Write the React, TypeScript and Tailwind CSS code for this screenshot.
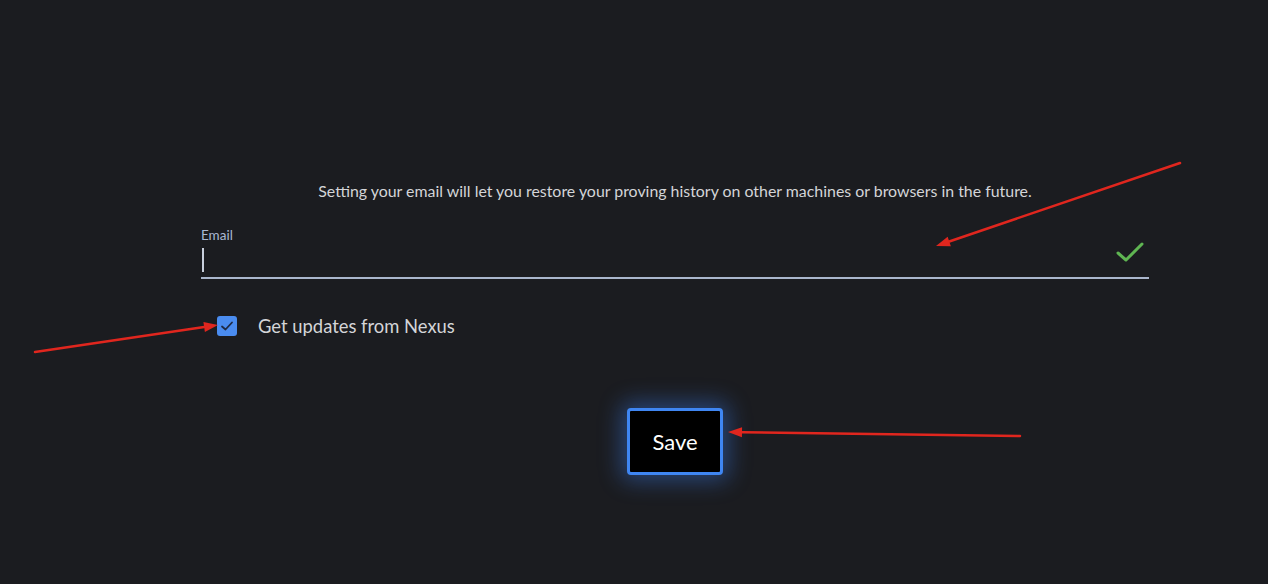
import React from 'react';

function Arrow({ x1, y1, x2, y2 }: { x1: number; y1: number; x2: number; y2: number }) {
  const ang = Math.atan2(y2 - y1, x2 - x1);
  const len = 14;
  const w = 5;
  const bx = x2 - Math.cos(ang) * len;
  const by = y2 - Math.sin(ang) * len;
  const px = -Math.sin(ang) * w;
  const py = Math.cos(ang) * w;
  return (
    <g>
      <line x1={x1} y1={y1} x2={bx} y2={by} stroke="#e0261e" strokeWidth={2.5} strokeLinecap="round" />
      <polygon points={`${x2},${y2} ${bx + px},${by + py} ${bx - px},${by - py}`} fill="#e0261e" />
    </g>
  );
}

export default function App() {
  const [checked, setChecked] = React.useState(true);
  return (
    <div
      className="relative w-[1268px] h-[584px] bg-[#1b1c20] overflow-hidden"
      style={{ fontFamily: 'Lato, "Noto Sans", sans-serif' }}
    >
      <div className="ml-[201px] w-[948px] pt-[181px] flex flex-col">
        <p className="text-center text-[15.9px] leading-[20px] text-[#d4d5d8] whitespace-nowrap">
          Setting your email will let you restore your proving history on other machines or browsers in the future.
        </p>

        <div className="mt-[26px] flex flex-col">
          <label className="text-[13.5px] leading-[16px] text-[#a9b8d2]">Email</label>
          <div className="relative h-[36px] border-b-2 border-[#aab6cc] flex items-center">
            <span className="ml-[1px] w-[2px] h-[24px] bg-[#c8cfdc]" />
            <svg
              className="absolute right-[5px] top-[-2px]"
              width="28"
              height="22"
              viewBox="0 0 28 22"
              fill="none"
            >
              <path d="M2 12 L10 19 L26 3" stroke="#5fb552" strokeWidth="3" strokeLinecap="round" strokeLinejoin="round" />
            </svg>
          </div>
        </div>

        <div className="mt-[33px] ml-[16px] flex items-center gap-[21px] h-[28px]">
          <button
            onClick={() => setChecked(!checked)}
            className="w-[20px] h-[20px] rounded-[3px] bg-[#4a8cf0] flex items-center justify-center"
          >
            {checked && (
              <svg width="14" height="12" viewBox="0 0 14 12" fill="none">
                <path d="M2 6.5 L5.5 9.5 L12 2.5" stroke="#1e2a44" strokeWidth="1.8" strokeLinecap="round" strokeLinejoin="round" />
              </svg>
            )}
          </button>
          <span className="text-[18.4px] leading-[28px] text-[#d4d5d8]">Get updates from Nexus</span>
        </div>

        <div className="mt-[68px] flex justify-center">
          <button className="w-[96px] h-[67px] rounded-[4px] border-[3px] border-[#3f86f2] bg-black text-white text-[22px] shadow-[0_0_22px_6px_rgba(59,130,246,0.4)]">
            Save
          </button>
        </div>
      </div>

      <svg className="absolute inset-0 pointer-events-none" width="1268" height="584">
        <Arrow x1={1180} y1={163} x2={936} y2={246} />
        <Arrow x1={35} y1={352} x2={218} y2={325} />
        <Arrow x1={1020} y1={436} x2={728} y2={432} />
      </svg>
    </div>
  );
}
